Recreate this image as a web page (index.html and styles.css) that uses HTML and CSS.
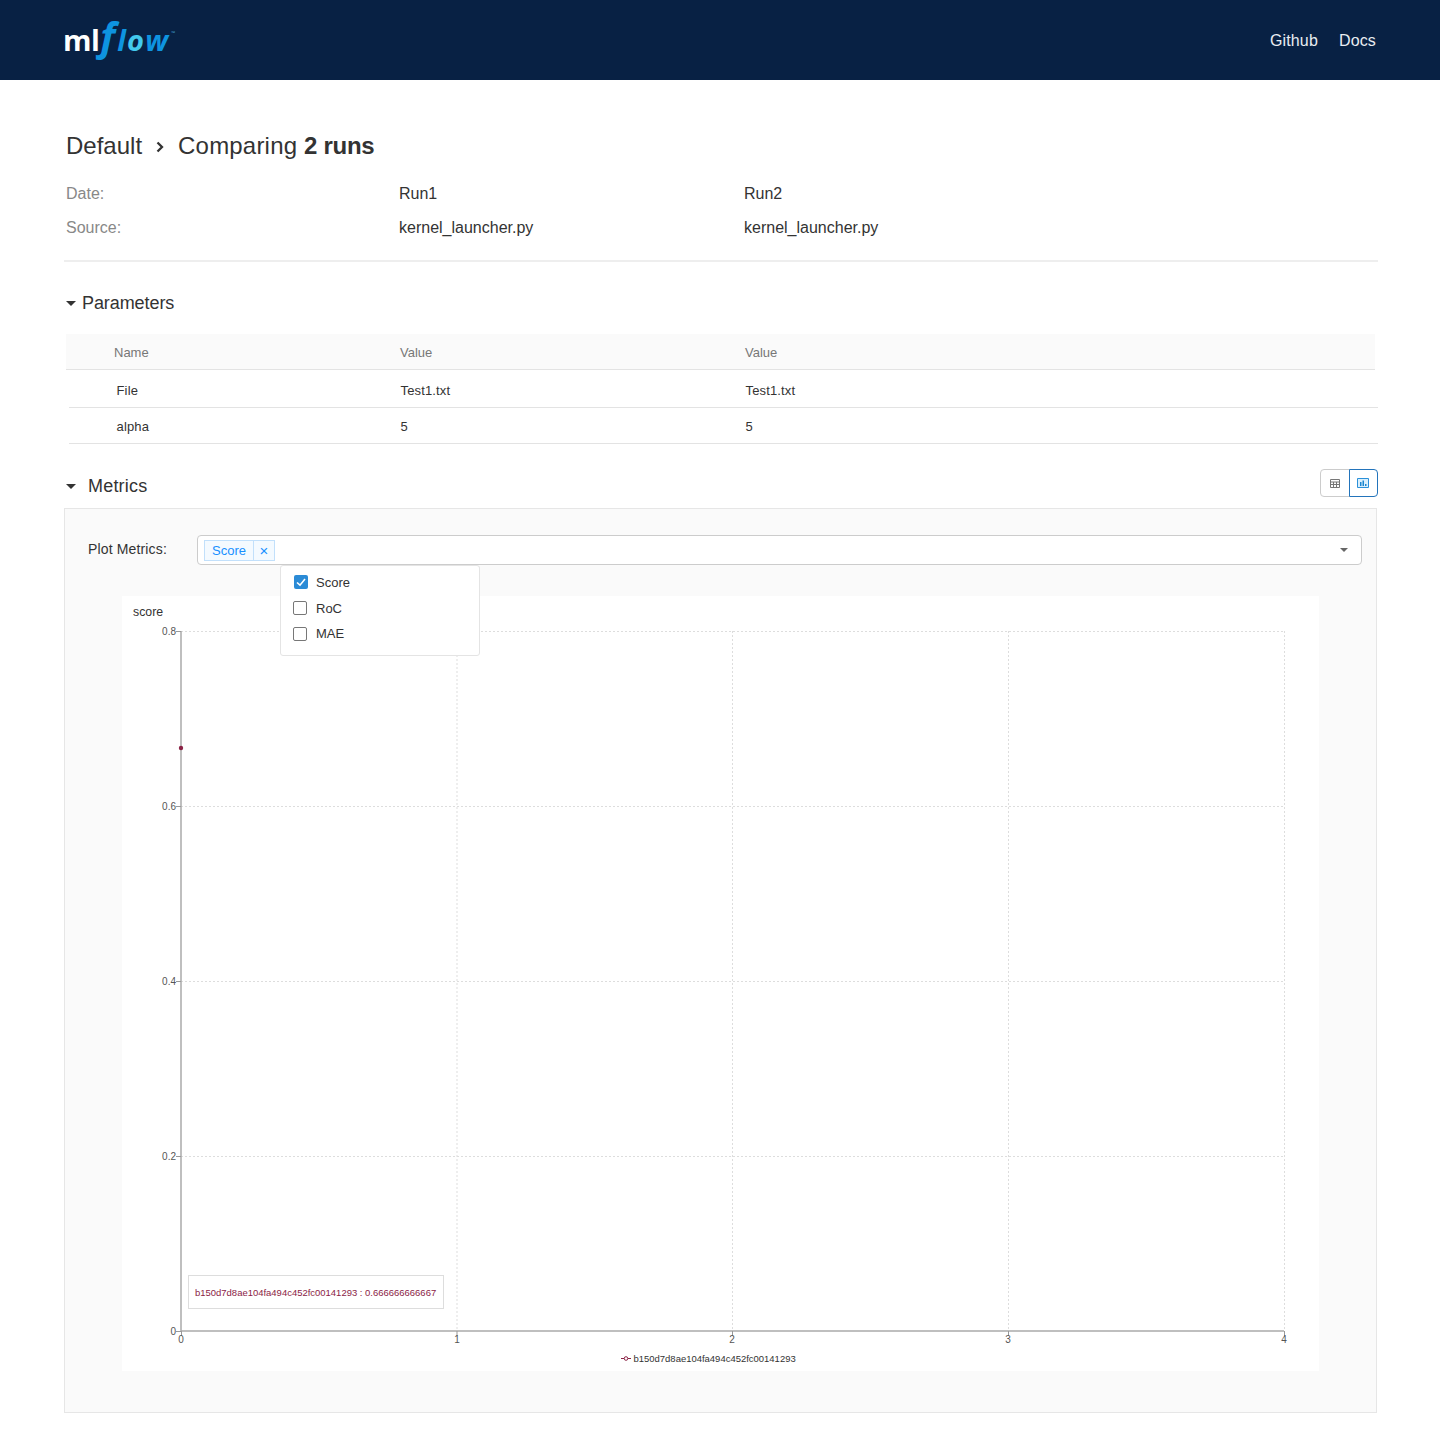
FILE: index.html
```html
<!DOCTYPE html>
<html lang="en">
<head>
    <meta charset="UTF-8">
    <title>MLflow</title>
    <link rel="stylesheet" href="styles.css">
</head>
<body>

<header class="topbar">
    <div class="logo"><span class="logoMl">ml</span><span class="logoF">f</span><span class="logoLow">l<span class="logoO">o</span>w</span><span class="logoTm">™</span></div>
    <nav class="topnav">
        <a href="#">Github</a>
        <a href="#">Docs</a>
    </nav>
</header>

<main class="page">
    <h1 class="crumbs">
        <span>Default</span>
        <svg class="crumbArrow" width="8" height="12" viewBox="0 0 8 12"><path d="M1.500 1.500 6 6l-4.500 4.500" fill="none" stroke="#333" stroke-width="2.300"/></svg>
        <span class="crumbLast">Comparing <b>2 runs</b></span>
    </h1>

    <div class="meta">
        <div class="metaLabel">Date:</div><div>Run1</div><div>Run2</div>
        <div class="metaLabel">Source:</div><div>kernel_launcher.py</div><div>kernel_launcher.py</div>
    </div>

    <h2 class="sectionHead paramsHead"><span class="caret"></span>Parameters</h2>

    <div class="paramTable">
        <div class="paramRow paramHeadRow"><div class="nameCell">Name</div><div>Value</div><div>Value</div></div>
        <div class="paramRow bodyRow rowOne"><div class="nameCell">File</div><div>Test1.txt</div><div>Test1.txt</div></div>
        <div class="paramRow bodyRow rowTwo"><div class="nameCell">alpha</div><div>5</div><div>5</div></div>
    </div>

    <div class="metricsHead">
        <h2 class="sectionHead"><span class="caret metricsCaret"></span>Metrics</h2>
        <div class="viewToggle">
            <button class="toggleBtn">
                <svg width="10" height="9" viewBox="0 0 10 9"><path d="M.5.5h9v8h-9zM.5 3h9M.5 5.500h9M3.500 3v5.500M6.500 3v5.500" fill="none" stroke="#777" stroke-width="1"/></svg>
            </button>
            <button class="toggleBtn toggleOn">
                <svg width="12" height="10" viewBox="0 0 12 10"><path d="M.5.5h11v9H.5z" fill="#d9effc" stroke="#2b90d9"/><path d="M3 8V4h1.500v4zM5.500 8V2.500H7V8zM8 8V6h1.500v2z" fill="#1a86d0"/></svg>
            </button>
        </div>
    </div>

    <section class="metricsPanel">
        <div class="plotControl">
            <label class="plotLabel">Plot Metrics:</label>
            <div class="selectBox">
                <span class="tag"><span class="tagText">Score</span><span class="tagClose">×</span></span>
                <span class="selectCaret"></span>
            </div>
        </div>

        <div class="dropdown">
            <div class="option"><span class="check checked"><svg width="14" height="14" viewBox="0 0 14 14"><path d="M3 7.500 6 10.200 11 4" fill="none" stroke="#fff" stroke-width="1.600"/></svg></span>Score</div>
            <div class="option"><span class="check"></span>RoC</div>
            <div class="option"><span class="check"></span>MAE</div>
        </div>

        <div class="chartBox">
            <svg class="chart" width="1197" height="775" viewBox="122 596 1197 775">
                <text class="chartTitle" x="133" y="615.500">score</text>

                <g class="grid">
                    <path d="M181 631.500H1284M181 806.500H1284M181 981.500H1284M181 1156.500H1284"/>
                    <path d="M457 631V1331M732.500 631V1331M1008.500 631V1331M1284.500 631V1331"/>
                </g>

                <path class="axis" d="M181 631V1331H1284"/>
                <path class="tick" d="M176 631.500h5M176 806.500h5M176 981.500h5M176 1156.500h5M176 1331.500h5M181.500 1331v5M457 1331v5M732.500 1331v5M1008.500 1331v5M1284.500 1331v5"/>

                <g class="yLabels">
                    <text x="176" y="635">0.8</text>
                    <text x="176" y="810">0.6</text>
                    <text x="176" y="985">0.4</text>
                    <text x="176" y="1160">0.2</text>
                    <text x="176" y="1335">0</text>
                </g>
                <g class="xLabels">
                    <text x="181" y="1343">0</text>
                    <text x="457" y="1343">1</text>
                    <text x="732" y="1343">2</text>
                    <text x="1008" y="1343">3</text>
                    <text x="1284" y="1343">4</text>
                </g>

                <circle cx="181" cy="748" r="2.200" fill="#8b2346"/>

                <rect class="tipBox" x="188.500" y="1275.500" width="255" height="33"/>
                <text class="tipText" x="195" y="1296">b150d7d8ae104fa494c452fc00141293 : 0.666666666667</text>

                <path d="M621 1358.500h10" stroke="#8b2346" stroke-width="1"/>
                <circle cx="626" cy="1358.500" r="1.800" fill="#fff" stroke="#8b2346"/>
                <text class="legendText" x="633.500" y="1362">b150d7d8ae104fa494c452fc00141293</text>
            </svg>
        </div>
    </section>
</main>

</body>
</html>
```

FILE: styles.css
```css
* {
  box-sizing: border-box;
}

body {
  margin: 0;
  font-family: "Liberation Sans", Arial, sans-serif;
  color: #333;
  background-color: #fff;
}

.topbar {
  height: 80px;
  background-color: #082144;
  display: flex;
  align-items: center;
  justify-content: space-between;
  padding: 0 64px;
}

.logo {
  display: flex;
  align-items: baseline;
  font-family: "Open Sans", sans-serif;
  font-weight: 700;
  font-size: 29px;
  line-height: 40px;
  margin-top: -4px;
  margin-left: -1px;
}

.logoMl {
  color: #fff;
  letter-spacing: -0.5px;
}

.logoF {
  color: #0e94e0;
  font-style: italic;
  font-size: 40px;
  line-height: 40px;
  margin-left: 1px;
  margin-right: 2px;
}

.logoLow {
  color: #0e94e0;
  font-style: italic;
  letter-spacing: 1.200px;
}

.logoO {
  color: #43c9ed;
}

.logoTm {
  color: #43a0d0;
  font-size: 5px;
  line-height: 10px;
  align-self: flex-start;
  margin-top: 12px;
  margin-left: 2px;
}

.topnav {
  display: flex;
  gap: 21px;
  padding-top: 2px;
}

.topnav a {
  color: #e9edf2;
  font-size: 16px;
  letter-spacing: 0.15px;
  text-decoration: none;
}

.page {
  width: 1314px;
  margin-left: 64px;
}

.crumbs {
  display: flex;
  align-items: center;
  margin: 0;
  padding: 51px 0 0 2px;
  height: 80px;
  font-size: 24px;
  font-weight: normal;
  line-height: 30px;
  color: #333;
}

.crumbLast {
  letter-spacing: 0.2px;
}

.crumbLast b {
  letter-spacing: -0.3px;
}

.crumbArrow {
  margin: 3px 14px 0 14px;
}

.meta {
  display: grid;
  grid-template-columns: 333px 345px 1fr;
  grid-auto-rows: 34px;
  align-items: center;
  padding-left: 2px;
  margin-top: 17px;
  height: 85px;
  font-size: 16px;
  color: #333;
  border-bottom: 2px solid #eee;
}

.metaLabel {
  color: #888;
}

.sectionHead {
  display: flex;
  align-items: center;
  margin: 0;
  font-size: 18px;
  font-weight: normal;
  line-height: 24px;
  color: #333;
}

.paramsHead {
  margin-top: 29px;
  padding-left: 2px;
  letter-spacing: -0.08px;
}

.caret {
  width: 0;
  height: 0;
  margin-right: 6px;
  border-left: 5px solid transparent;
  border-right: 5px solid transparent;
  border-top: 5px solid #333;
}

.paramTable {
  margin-top: 19px;
  font-size: 13px;
}

.paramRow {
  display: grid;
  align-items: center;
}

.paramHeadRow {
  grid-template-columns: 286px 345px 1fr;
  width: 1309px;
  height: 36px;
  margin-left: 2px;
  padding-left: 48px;
  padding-top: 2px;
  background-color: #fafafa;
  border-bottom: 1px solid #e3e3e3;
  color: #777;
}

.bodyRow {
  grid-template-columns: 284px 345px 1fr;
  margin-left: 5px;
  padding-left: 47.500px;
  border-bottom: 1px solid #e3e3e3;
  color: #333;
  letter-spacing: 0.15px;
}

.rowOne {
  height: 38px;
  padding-top: 4px;
}

.rowTwo {
  height: 36px;
  padding-top: 1px;
}

.metricsHead {
  display: flex;
  justify-content: space-between;
  align-items: flex-start;
  height: 64px;
  padding-top: 25px;
}

.metricsHead .sectionHead {
  padding: 5px 0 0 2px;
  letter-spacing: 0.2px;
}

.metricsCaret {
  margin-right: 12px;
}

.viewToggle {
  display: flex;
}

.toggleBtn {
  display: flex;
  align-items: center;
  justify-content: center;
  width: 30px;
  height: 28px;
  padding: 0;
  background-color: #fff;
  border: 1px solid #ccc;
  border-radius: 4px 0 0 4px;
}

.toggleOn {
  width: 29px;
  margin-left: -1px;
  padding-right: 1px;
  border: 1px solid #2374bb;
  border-radius: 0 4px 4px 0;
}

.metricsPanel {
  position: relative;
  width: 1313px;
  height: 905px;
  background-color: #fafafa;
  border: 1px solid #e6e6e6;
}

.plotControl {
  display: flex;
  align-items: center;
  height: 30px;
  margin-top: 26px;
  padding-left: 23px;
}

.plotLabel {
  width: 109px;
  font-size: 14px;
  letter-spacing: 0.15px;
  margin-top: -2px;
  color: #333;
}

.selectBox {
  display: flex;
  align-items: center;
  justify-content: space-between;
  width: 1165px;
  height: 30px;
  padding: 0 13px 0 6px;
  background-color: #fff;
  border: 1px solid #ccc;
  border-radius: 4px;
}

.tag {
  display: flex;
  height: 21px;
  color: #1890ff;
  font-size: 13px;
  line-height: 20px;
  background-color: #f4faff;
  border: 1px solid #c2e0fb;
  margin-top: 1px;
}

.tagText {
  padding: 0 7px;
  border-right: 1px solid #c2e0fb;
}

.tagClose {
  width: 20px;
  text-align: center;
  font-size: 15px;
}

.selectCaret {
  width: 0;
  height: 0;
  border-left: 4.500px solid transparent;
  border-right: 4.500px solid transparent;
  border-top: 4.500px solid #666;
}

.dropdown {
  position: absolute;
  left: 215px;
  top: 56px;
  z-index: 2;
  width: 200px;
  height: 91px;
  padding-top: 4px;
  background-color: #fff;
  border: 1px solid #e4e4e4;
  border-radius: 3px;
  font-size: 13px;
  color: #333;
}

.option {
  display: flex;
  align-items: center;
  height: 25.500px;
  padding-left: 12px;
}

.check {
  display: block;
  width: 14px;
  height: 14px;
  margin-right: 9px;
  background-color: #fff;
  border: 1.500px solid #777;
  border-radius: 2px;
}

.checked {
  margin-left: 1px;
  margin-right: 8px;
  margin-top: -2px;
  background-color: #2b8bd6;
  border: none;
}

.check svg {
  display: block;
}

.chartBox {
  width: 1197px;
  height: 775px;
  margin: 31px 0 0 57px;
  background-color: #fff;
}

.chart {
  display: block;
}

.chart text {
  font-family: "Liberation Sans", Arial, sans-serif;
}

.chartTitle {
  font-size: 12.300px;
  fill: #333;
}

.grid path {
  fill: none;
  stroke: #ddd;
  stroke-width: 1;
  stroke-dasharray: 2 2;
}

.axis {
  fill: none;
  stroke: #aaa;
  stroke-width: 1.500;
}

.tick {
  fill: none;
  stroke: #999;
  stroke-width: 1;
}

.yLabels text {
  font-size: 10px;
  fill: #555;
  text-anchor: end;
}

.xLabels text {
  font-size: 10px;
  fill: #555;
  text-anchor: middle;
}

.tipBox {
  fill: #fff;
  stroke: #ddd;
  stroke-width: 1;
}

.tipText {
  font-size: 9.470px;
  fill: #8b2346;
}

.legendText {
  font-size: 9.470px;
  fill: #333;
}
```
